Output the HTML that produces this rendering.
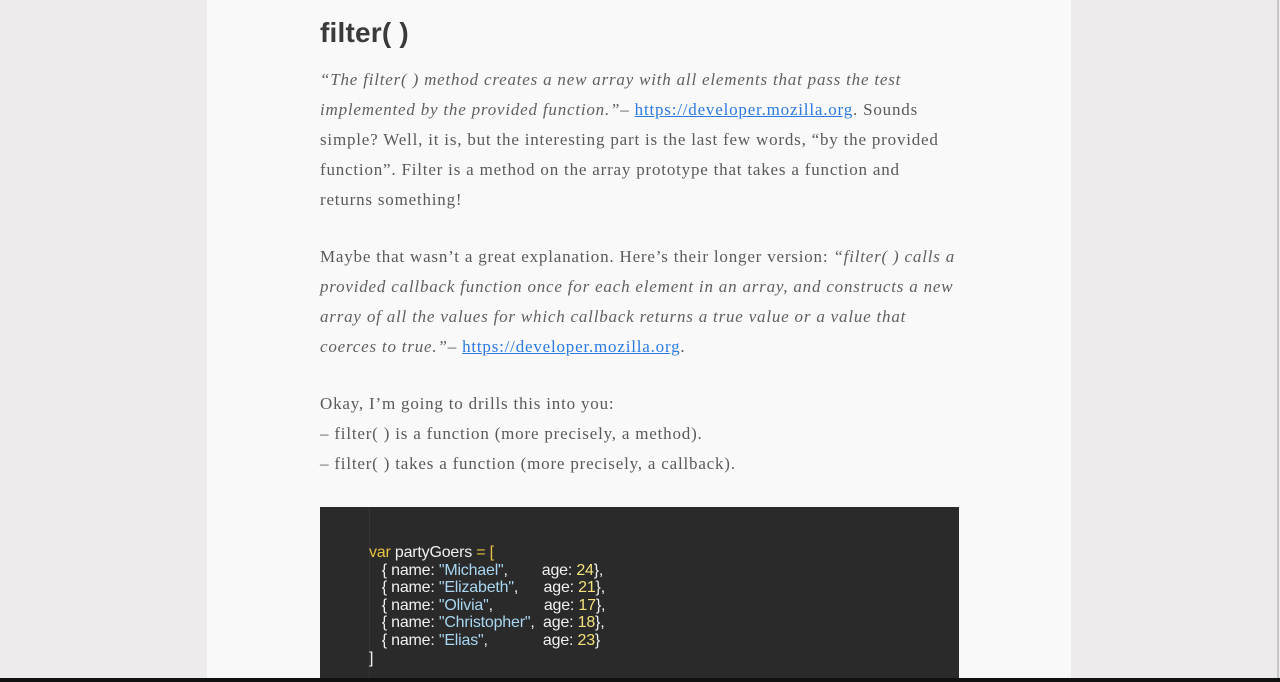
<!DOCTYPE html>
<html><head><meta charset="utf-8"><style>
html,body{margin:0;padding:0;width:1280px;height:682px;overflow:hidden;background:#edebec;}
.page{position:absolute;left:207px;top:0;width:864px;height:682px;background:#f9f9f9;}
h1{position:absolute;left:320px;top:14px;margin:0;font:bold 28px/38px "Liberation Sans",sans-serif;color:#3a3a3a;letter-spacing:0.2px;}
.t{position:absolute;left:320px;width:700px;font:17px/30px "Liberation Serif",serif;color:#5a5a5a;white-space:nowrap;letter-spacing:0.8px;}
.t i{color:#606060;}
a{color:#2a7ae2;text-decoration:underline;}
.code{position:absolute;left:320px;top:507px;width:639px;height:171px;background:#2a2a2a;}
.code .ln{position:absolute;left:49px;top:0;width:1px;height:171px;background:#333;}
.code pre{position:absolute;left:49px;top:37px;margin:0;font:16px/17.6px "Liberation Sans",sans-serif;color:#f0f0f0;letter-spacing:-0.2px;}
.k{color:#e8c341}.s{color:#a9d6f0}.n{color:#f3e27a}
.bar{position:absolute;left:0;top:678px;width:1280px;height:4px;background:#111;}
.sb{position:absolute;left:1277px;top:0;width:2px;height:678px;background:#c8c8c8;}
</style></head><body>
<div class="page"></div>
<h1>filter( )</h1>
<div class="t" style="top:65px"><i>“The filter( ) method creates a new array with all elements that pass the test</i><br><i>implemented by the provided function.”</i>– <a>https://developer.mozilla.org</a>. Sounds<br>simple? Well, it is, but the interesting part is the last few words, “by the provided<br>function”. Filter is a method on the array prototype that takes a function and<br>returns something!</div>
<div class="t" style="top:242px">Maybe that wasn’t a great explanation. Here’s their longer version: <i>“filter( ) calls a</i><br><i>provided callback function once for each element in an array, and constructs a new</i><br><i>array of all the values for which callback returns a true value or a value that</i><br><i>coerces to true.”</i>– <a>https://developer.mozilla.org</a>.</div>
<div class="t" style="top:389px">Okay, I’m going to drills this into you:<br>– filter( ) is a function (more precisely, a method).<br>– filter( ) takes a function (more precisely, a callback).</div>
<div class="code"><div class="ln"></div><pre><span class="k">var</span> partyGoers <span class="k">= [</span>
   { name: <span class="s">"Michael"</span>,        age: <span class="n">24</span>},
   { name: <span class="s">"Elizabeth"</span>,      age: <span class="n">21</span>},
   { name: <span class="s">"Olivia"</span>,            age: <span class="n">17</span>},
   { name: <span class="s">"Christopher"</span>,  age: <span class="n">18</span>},
   { name: <span class="s">"Elias"</span>,             age: <span class="n">23</span>}
]</pre></div>
<div class="sb"></div>
<div class="bar"></div>
</body></html>
